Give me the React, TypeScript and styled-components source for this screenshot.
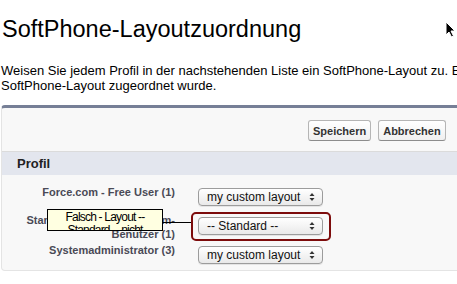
import React from "react";
import styled, { createGlobalStyle } from "styled-components";

const GlobalStyle = createGlobalStyle`
    html, body {
        margin: 0;
        padding: 0;
        background: #fff;
        overflow: hidden;
    }
    body {
        font-family: "Liberation Sans", Arial, sans-serif;
        color: #000;
    }
`

type Profile = {
    label: React.ReactNode;
    value: string;
    flagged?: boolean;
};

const profiles: Profile[] = [
    { label: "Force.com - Free User (1)", value: "my custom layout" },
    { label: <>Standardbenutzer Plattform-<br />Benutzer (1)</>, value: "-- Standard --", flagged: true },
    { label: "Systemadministrator (3)", value: "my custom layout" },
];

const App = () => {
    return (
        <Page>
            <GlobalStyle />
            <Cursor width="11" height="17" viewBox="0 0 11 17">
                <path d="M1 1 L1 14 L4 11 L6.5 16 L8.5 15 L6 10 L10 10 Z" fill="#000" stroke="#fff" strokeWidth="1" strokeLinejoin="round" />
            </Cursor>
            <Title>SoftPhone-Layoutzuordnung</Title>
            <Intro>
                Weisen Sie jedem Profil in der nachstehenden Liste ein SoftPhone-Layout zu. Es wird das Standardlayout verwendet, wenn keinem Profil ein<br />
                SoftPhone-Layout zugeordnet wurde.
            </Intro>
            <Panel>
                <ButtonBar>
                    <span />
                    <Buttons>
                        <Button>Speichern</Button>
                        <Button>Abbrechen</Button>
                    </Buttons>
                </ButtonBar>
                <SubHeader>Profil</SubHeader>
                <Rows>
                    {profiles.map((p, i) => (
                        <Row key={i} $flagged={p.flagged}>
                            <Label $flagged={p.flagged}>{p.label}</Label>
                            <Field $flagged={p.flagged}>
                                <Select>
                                    <span>{p.value}</span>
                                    <svg width="6" height="10" viewBox="0 0 6 10">
                                        <path d="M0.5 4 L3 1 L5.5 4 Z" fill="#333" />
                                        <path d="M0.5 6 L3 9 L5.5 6 Z" fill="#333" />
                                    </svg>
                                </Select>
                            </Field>
                            {p.flagged && (
                                <Callout>
                                    Falsch - Layout --<br />Standard -- nicht
                                </Callout>
                            )}
                        </Row>
                    ))}
                </Rows>
            </Panel>
        </Page>
    );
};

export default App;

const Page = styled.div`
    position: relative;
    width: 760px;
    padding: 15px 0 0 1px;
`

const Cursor = styled.svg`
    position: absolute;
    left: 445px;
    top: 21px;
`

const Title = styled.h1`
    margin: 0 0 0 1px;
    font-size: 23.5px;
    line-height: 28px;
    font-weight: normal;
`

const Intro = styled.p`
    margin: 20px 0 0;
    font-size: 13px;
    line-height: 15px;
    white-space: nowrap;
`

const Panel = styled.div`
    margin-top: 12px;
    background: #f8f8f8;
    border: 1px solid #e4e4e4;
    border-top: 3px solid #767f96;
    border-radius: 4px;
`

const ButtonBar = styled.div`
    display: grid;
    grid-template-columns: 306px auto;
    padding: 12px 0 10px;
    border-bottom: 1px solid #dbdbdb;
`

const Buttons = styled.div`
    display: flex;
    gap: 7px;
`

const Button = styled.button`
    height: 21px;
    padding: 0 4px;
    border: 1px solid #b5b5b5;
    border-bottom-color: #8c8c8c;
    border-radius: 3px;
    background: linear-gradient(#ffffff, #f0f0f0);
    font-family: "Liberation Sans", Arial, sans-serif;
    font-size: 11px;
    font-weight: bold;
    color: #333;
`

const SubHeader = styled.div`
    height: 23px;
    line-height: 23px;
    padding-left: 15px;
    background: #e3e6ee;
    font-size: 13px;
    font-weight: bold;
    color: #222;
`

const Rows = styled.div`
    padding: 8px 0 0;
`

const Row = styled.div<{ $flagged?: boolean }>`
    position: relative;
    display: grid;
    grid-template-columns: 173px auto;
    column-gap: 16px;
    align-items: ${({ $flagged }) => ($flagged ? "center" : "start")};
`

const Label = styled.div<{ $flagged?: boolean }>`
    padding-top: ${({ $flagged }) => ($flagged ? "0" : "2px")};
    text-align: right;
    font-size: 11px;
    line-height: 14px;
    font-weight: bold;
    color: #4a4a56;
`

const Field = styled.div<{ $flagged?: boolean }>`
    justify-self: start;
    padding: 3px 6px 4px 5px;
    border: 2px solid ${({ $flagged }) => ($flagged ? "#7d0c0c" : "transparent")};
    border-radius: 5px;
`

const Select = styled.div`
    box-sizing: border-box;
    width: 125px;
    height: 18px;
    display: flex;
    align-items: center;
    justify-content: space-between;
    padding: 0 7px 0 8px;
    border: 1px solid #9c9c9c;
    border-radius: 4px;
    background: linear-gradient(#ffffff, #e9e9e9);
    box-shadow: 0 1px 0 rgba(0, 0, 0, 0.08);
    font-size: 12px;
    color: #111;
`

const Callout = styled.div`
    position: absolute;
    left: 45px;
    top: -3px;
    box-sizing: border-box;
    width: 116px;
    height: 22px;
    padding-top: 1px;
    background: #ffffe1;
    border: 1px solid #000;
    font-size: 12px;
    line-height: 13px;
    letter-spacing: -0.8px;
    text-align: center;
    color: #000;
    clip-path: inset(0 -40px 0 0);
    &::after {
        content: "";
        position: absolute;
        left: 100%;
        top: 12px;
        width: 29px;
        height: 1px;
        background: #000;
    }
`
